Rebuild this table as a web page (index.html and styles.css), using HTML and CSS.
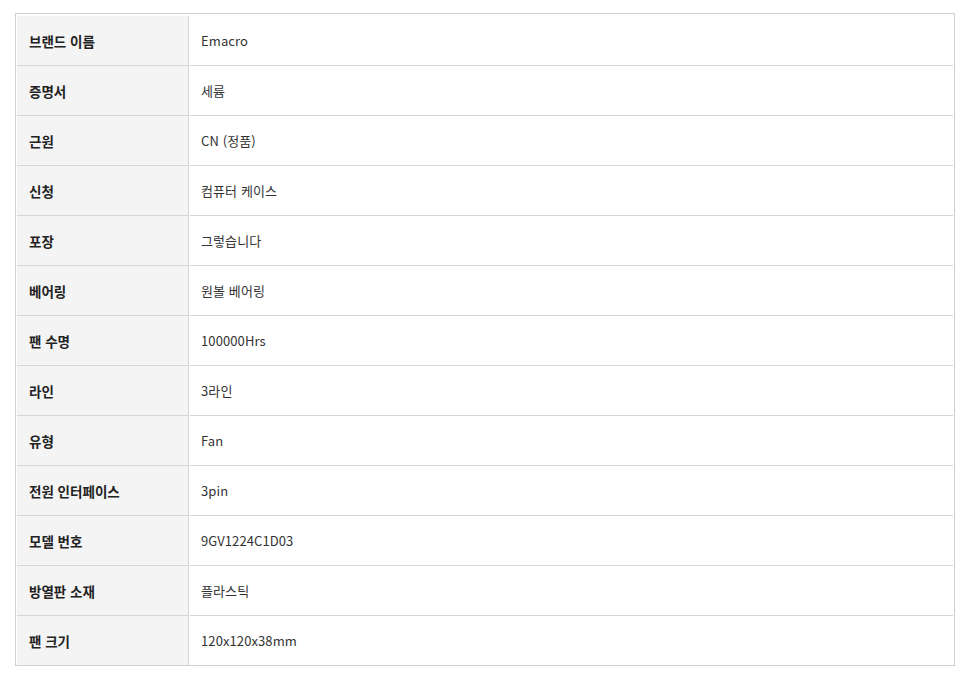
FILE: index.html
```html
<!DOCTYPE html>
<html lang="ko">
<head>
<meta charset="utf-8">
<title>Specs</title>
<link rel="stylesheet" href="styles.css">
</head>
<body>
<table class="spec">
  <tbody>
    <tr><td class="k">브랜드 이름</td><td class="v">Emacro</td></tr>
    <tr><td class="k">증명서</td><td class="v">세륨</td></tr>
    <tr><td class="k">근원</td><td class="v">CN (정품)</td></tr>
    <tr><td class="k">신청</td><td class="v">컴퓨터 케이스</td></tr>
    <tr><td class="k">포장</td><td class="v">그렇습니다</td></tr>
    <tr><td class="k">베어링</td><td class="v">원볼 베어링</td></tr>
    <tr><td class="k">팬 수명</td><td class="v">100000Hrs</td></tr>
    <tr><td class="k">라인</td><td class="v">3라인</td></tr>
    <tr><td class="k">유형</td><td class="v">Fan</td></tr>
    <tr><td class="k">전원 인터페이스</td><td class="v">3pin</td></tr>
    <tr><td class="k">모델 번호</td><td class="v">9GV1224C1D03</td></tr>
    <tr><td class="k">방열판 소재</td><td class="v">플라스틱</td></tr>
    <tr><td class="k">팬 크기</td><td class="v">120x120x38mm</td></tr>
  </tbody>
</table>
</body>
</html>
```
FILE: styles.css
```css
html, body {
  margin: 0;
  background: #fff;
}
body {
  padding: 13px 15px;
  font-family: "Noto Sans CJK KR", "Noto Sans", sans-serif;
  font-size: 13px;
}
.spec {
  width: 940px;
  border: 1px solid #d0d0d0;
  border-collapse: separate;
  border-spacing: 1px 0;
  padding-top: 2px;
}
.spec td {
  height: 49px;
  padding: 0;
  border-bottom: 1px solid #d6d6d6;
  vertical-align: middle;
  line-height: 18px;
}
.spec tr:last-child td {
  border-bottom: none;
  height: 49px;
}
.spec .k {
  width: 159px;
  padding-left: 12px;
  background: #f4f4f4;
  border-right: 1px solid #d6d6d6;
  color: #222;
  font-weight: bold;
  font-size: 13.5px;
}
.spec .v {
  padding-left: 11px;
  color: #333;
  letter-spacing: 0.1px;
}
```
